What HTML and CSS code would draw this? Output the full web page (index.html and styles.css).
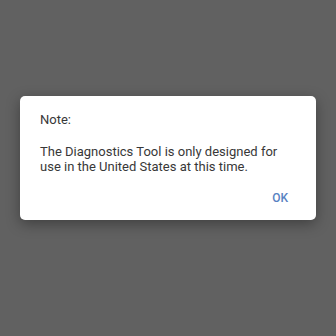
FILE: index.html
```html
<!DOCTYPE html>
<html>
<head>
<meta charset="utf-8">
<link rel="stylesheet" href="styles.css">
</head>
<body>
<div class="dialog">
  <div class="title">Note:</div>
  <div class="message">The Diagnostics Tool is only designed for use in the United States at this time.</div>
  <div class="actions"><span class="ok">OK</span></div>
</div>
</body>
</html>
```
FILE: styles.css
```css
html, body {
  margin: 0;
  padding: 0;
}
body {
  width: 336px;
  height: 336px;
  background: #616161;
  font-family: Roboto, "Liberation Sans", sans-serif;
  overflow: hidden;
}
.dialog {
  margin: 96px 0 0 20px;
  width: 296px;
  height: 124px;
  box-sizing: border-box;
  background: #fff;
  border-radius: 5px;
  box-shadow: 0 4px 14px rgba(0,0,0,0.35);
  padding: 16px 20px 0 20px;
}
.title {
  font-size: 13px;
  line-height: 15px;
  color: #383838;
}
.message {
  margin-top: 17px;
  font-size: 13px;
  line-height: 15px;
  color: #383838;
  width: 250px;
}
.actions {
  display: flex;
  justify-content: flex-end;
  margin-top: 17px;
  padding-right: 8px;
}
.ok {
  font-size: 12px;
  line-height: 14px;
  font-weight: 500;
  color: #5782c2;
}
```
